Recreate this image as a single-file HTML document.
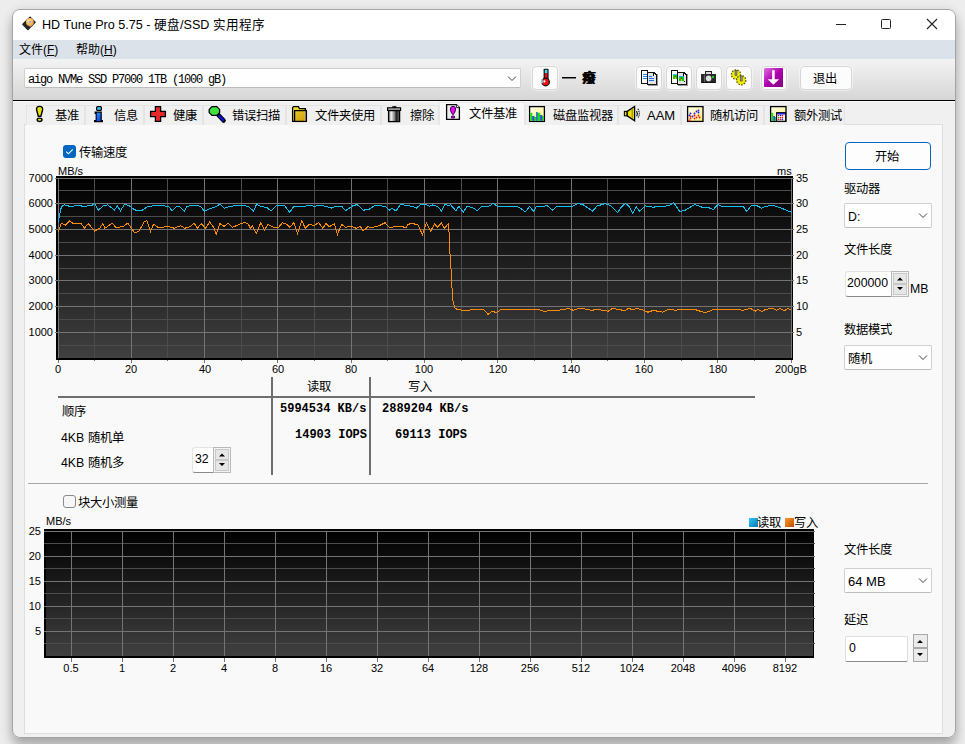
<!DOCTYPE html>
<html lang="zh-CN">
<head>
<meta charset="utf-8">
<style>
*{box-sizing:border-box;margin:0;padding:0}
html,body{width:965px;height:744px;overflow:hidden}
body{position:relative;background:#ededed;font-family:"Liberation Sans",sans-serif;color:#000;font-size:12px}
.a{position:absolute}
#shadow{position:absolute;left:12px;top:9px;width:944px;height:729px;border-radius:8px;box-shadow:0 9px 12px rgba(0,0,0,0.26),0 0 10px rgba(0,0,0,0.09)}
#win{position:absolute;left:12px;top:9px;width:944px;height:729px;border:1px solid #a4a4a4;border-radius:8px;overflow:hidden;background:#f0f0f0}
#in{position:absolute;left:-13px;top:-10px;width:965px;height:744px}
.t{position:absolute;white-space:nowrap;line-height:1}
.yl{position:absolute;text-align:right;font-size:11px;line-height:14px;white-space:nowrap;color:#000}
.yr{position:absolute;text-align:left;font-size:11px;line-height:14px;white-space:nowrap;color:#000}
.xl{position:absolute;text-align:center;font-size:11px;line-height:14px;white-space:nowrap;color:#000}
.tab{position:absolute;top:105px;height:20px;background:#f0f0f0;border:1px solid #e4e4e4;border-bottom:none}
.tab.sel{top:102px;height:23px;background:#f9f9f9;border-color:#e8e8e8;z-index:2}
.tb{position:absolute;top:66px;width:26px;height:24px;background:#fcfcfc;border:1px solid #d6d6d6;border-radius:4px;box-shadow:0 0 0 1px rgba(255,255,255,0.45)}
.mono{font-family:"Liberation Mono",monospace;font-weight:bold;font-size:12px}
.combo{position:absolute;background:#fefefe;border:1px solid #d0d0d0;border-bottom-color:#bdbdbd;border-radius:2px}
.chev{position:absolute}
</style>
</head>
<body>
<div id="shadow"></div>
<div id="win"><div id="in">
  <!-- title bar -->
  <div class="a" style="left:0;top:0;width:965px;height:40px;background:#fff"></div>
  <svg class="a" style="left:18px;top:12px" width="24" height="24" viewBox="0 0 24 24">
    <defs><radialGradient id="hd" cx="0.4" cy="0.4" r="0.6"><stop offset="0" stop-color="#ffe6a0"/><stop offset="1" stop-color="#eea040"/></radialGradient></defs>
    <g transform="rotate(-45 11 11.3)">
      <rect x="5.2" y="7" width="11.6" height="8.6" rx="0.8" fill="#262626"/>
      <rect x="9" y="13" width="4" height="2" fill="#8a8a8a"/>
    </g>
    <circle cx="11.9" cy="10" r="3.9" fill="url(#hd)"/>
    <circle cx="11.9" cy="10" r="1.2" fill="#a8b0c8"/>
  </svg>
  <div class="t" style="left:42px;top:19px;font-size:12.6px;color:#000">HD Tune Pro 5.75 - 硬盘/SSD 实用程序</div>
  <div class="a" style="left:836px;top:24px;width:10px;height:1px;background:#222"></div>
  <div class="a" style="left:881px;top:19px;width:10px;height:10px;border:1px solid #222;border-radius:1.5px"></div>
  <svg class="a" style="left:926px;top:18px" width="12" height="12" viewBox="0 0 12 12"><path d="M1 1 L11 11 M11 1 L1 11" stroke="#222" stroke-width="1.1"/></svg>

  <!-- menu bar -->
  <div class="a" style="left:0;top:40px;width:965px;height:19px;background:#dbe2ea"></div>
  <div class="t" style="left:19px;top:44px;font-size:12px">文件(<u>F</u>)</div>
  <div class="t" style="left:76px;top:44px;font-size:12px">帮助(<u>H</u>)</div>

  <!-- toolbar -->
  <div class="a" style="left:0;top:59px;width:965px;height:41px;background:linear-gradient(#f3f3f3,#d6d6d6)"></div>
  <div class="a" style="left:0;top:100px;width:965px;height:1px;background:#000"></div>
  <div class="a" style="left:0;top:101px;width:965px;height:1px;background:#fbfbfb"></div>
  <div class="combo" style="left:24px;top:68px;width:497px;height:20px;border-radius:2px"></div>
  <div class="t mono" style="left:28px;top:74px;font-weight:normal;font-size:12px;letter-spacing:-1.2px">aigo NVMe SSD P7000 1TB (1000 gB)</div>
  <svg class="chev" style="left:507px;top:75px" width="10" height="7" viewBox="0 0 10 7"><path d="M1 1.5 L5 5.5 L9 1.5" stroke="#444" stroke-width="1" fill="none"/></svg>

  <div class="tb" style="left:532px"></div>
  <svg class="a" style="left:539px;top:68px" width="14" height="20" viewBox="0 0 14 20">
    <rect x="4.6" y="0.7" width="5" height="13" rx="0.8" fill="#111"/>
    <rect x="5.8" y="1.8" width="2.6" height="3.4" fill="#40e0f0"/>
    <rect x="5.8" y="5.2" width="2.6" height="9" fill="#e81010"/>
    <circle cx="6.6" cy="14" r="4.4" fill="#111"/>
    <circle cx="6.6" cy="14" r="3.3" fill="#e81010"/>
    <circle cx="5.4" cy="13.4" r="1.1" fill="#fff"/>
    <rect x="2" y="11.2" width="1.8" height="4.2" fill="#7fdce6"/>
  </svg>
  <div class="a" style="left:562px;top:77px;width:14px;height:1px;background:#000"></div><div class="a" style="left:562px;top:78px;width:14px;height:1px;background:#777"></div>
  <div class="t" style="left:582px;top:71px;font-size:13px;font-weight:bold;text-shadow:0.5px 0 0 #000">癈</div>

  <div class="tb" style="left:636px"></div>
  <svg class="a" style="left:640px;top:69px" width="19" height="18" viewBox="0 0 19 18" shape-rendering="crispEdges">
    <rect x="1" y="1" width="7" height="14" fill="#111"/>
    <rect x="2" y="2" width="5" height="12" fill="#fafafa"/>
    <rect x="3" y="5" width="4" height="1" fill="#1a8cff"/><rect x="3" y="7" width="4" height="1" fill="#1a8cff"/><rect x="3" y="9" width="4" height="1" fill="#1a8cff"/>
    <rect x="8" y="16" width="10" height="1" fill="#999"/><rect x="17" y="5" width="1" height="12" fill="#999"/>
    <path d="M7 3 H14 L17 6 V16 H7 Z" fill="#111"/>
    <path d="M8 4 H13 V7 H16 V15 H8 Z" fill="#e4e4e4"/>
    <path d="M13.5 4 L16 6.5 H13.5 Z" fill="#fff"/>
    <rect x="9" y="7" width="3" height="1" fill="#1a6cff"/><rect x="9" y="9" width="5" height="1" fill="#1a6cff"/><rect x="9" y="11" width="5" height="1" fill="#1a6cff"/>
  </svg>
  <div class="tb" style="left:666px"></div>
  <svg class="a" style="left:670px;top:69px" width="19" height="18" viewBox="0 0 19 18" shape-rendering="crispEdges">
    <rect x="1" y="1" width="7" height="14" fill="#111"/>
    <rect x="2" y="2" width="5" height="12" fill="#fafafa"/>
    <rect x="3" y="5" width="4" height="1" fill="#20d0ff"/><rect x="3" y="6" width="4" height="4" fill="#10c810"/><rect x="5" y="7" width="1" height="1" fill="#e00000"/><rect x="5" y="8" width="1" height="2" fill="#e0d000"/>
    <rect x="8" y="16" width="10" height="1" fill="#999"/><rect x="17" y="5" width="1" height="12" fill="#999"/>
    <path d="M7 3 H14 L17 6 V16 H7 Z" fill="#111"/>
    <path d="M8 4 H13 V7 H16 V15 H8 Z" fill="#e4e4e4"/>
    <path d="M13.5 4 L16 6.5 H13.5 Z" fill="#fff"/>
    <rect x="9" y="7" width="5" height="1" fill="#20a0ff"/><rect x="9" y="8" width="5" height="4" fill="#10c810"/><rect x="11" y="9" width="1" height="1" fill="#e00000"/><rect x="11" y="10" width="1" height="2" fill="#e0d000"/><rect x="14" y="12" width="1" height="1" fill="#111"/>
  </svg>
  <div class="tb" style="left:696px"></div>
  <svg class="a" style="left:700px;top:70px" width="18" height="15" viewBox="0 0 18 15" shape-rendering="crispEdges">
    <rect x="5" y="1" width="7" height="4" fill="#222"/>
    <rect x="6" y="2" width="5" height="2" fill="#d8d8d8"/>
    <rect x="1" y="4" width="15" height="9" fill="#2a2a2a"/>
    <rect x="2" y="12" width="13" height="1" fill="#111"/>
    <rect x="4" y="5" width="1" height="7" fill="#666"/>
    <circle cx="8.6" cy="8.4" r="2.8" fill="#e0e0e0" shape-rendering="auto"/>
    <rect x="12" y="6" width="2" height="2" fill="#10e010"/>
  </svg>
  <div class="tb" style="left:726px"></div>
  <svg class="a" style="left:729px;top:69px" width="20" height="18" viewBox="0 0 20 18">
    <circle cx="7" cy="5.5" r="4.6" fill="#f0ec00" stroke="#5a5400" stroke-width="1.2" stroke-dasharray="1.6 1.2"/>
    <circle cx="12.2" cy="11.2" r="4.6" fill="#f0ec00" stroke="#5a5400" stroke-width="1.2" stroke-dasharray="1.6 1.2"/>
    <rect x="6" y="1.5" width="2" height="5" fill="#9090b0" stroke="#333" stroke-width="0.5"/>
    <rect x="11.2" y="7" width="2" height="5" fill="#9090b0" stroke="#333" stroke-width="0.5"/>
  </svg>
  <div class="tb" style="left:761px"></div>
  <svg class="a" style="left:764px;top:68px" width="19" height="19" viewBox="0 0 19 19">
    <defs><linearGradient id="pg" x1="0" y1="0" x2="1" y2="1"><stop offset="0" stop-color="#e070e0"/><stop offset="0.5" stop-color="#b000b0"/><stop offset="1" stop-color="#800080"/></linearGradient></defs>
    <rect x="0" y="0" width="19" height="19" rx="1" fill="url(#pg)"/>
    <path d="M8.1 2.2 H10.7 V11.2 H15.2 L9.4 16.8 L3.6 11.2 H8.1 Z" fill="#fff"/>
  </svg>
  <div class="tb" style="left:800px;width:52px"></div>
  <div class="t" style="left:813px;top:73px;font-size:12.3px">退出</div>

  <!-- tabs -->
  <div class="a" style="left:24px;top:124px;width:919px;height:610px;background:#f9f9f9;border:1px solid #dedede"></div>
  <div class="tab" style="left:26px;width:59px"></div>
  <div class="tab" style="left:85px;width:59px"></div>
  <div class="tab" style="left:144px;width:59px"></div>
  <div class="tab" style="left:203px;width:83px"></div>
  <div class="tab" style="left:286px;width:95px"></div>
  <div class="tab" style="left:381px;width:58px"></div>
  <div class="tab sel" style="left:439px;width:86px"></div>
  <div class="tab" style="left:525px;width:93px"></div>
  <div class="tab" style="left:618px;width:63px"></div>
  <div class="tab" style="left:681px;width:83px"></div>
  <div class="tab" style="left:764px;width:81px"></div>
  <svg class="a" style="left:0;top:0;z-index:3" width="965" height="130" viewBox="0 0 965 130">
    <defs>
      <linearGradient id="gi" x1="0" y1="0" x2="1" y2="1"><stop offset="0" stop-color="#30a0ff"/><stop offset="1" stop-color="#0030f0"/></linearGradient>
      <linearGradient id="gy" x1="0" y1="0" x2="1" y2="1"><stop offset="0" stop-color="#ffffe8"/><stop offset="1" stop-color="#fff080"/></linearGradient>
      <linearGradient id="gf" x1="0" y1="0" x2="1" y2="1"><stop offset="0" stop-color="#e8cc30"/><stop offset="1" stop-color="#d09a00"/></linearGradient>
      <linearGradient id="gt" x1="0" y1="0" x2="1" y2="0"><stop offset="0" stop-color="#909090"/><stop offset="0.25" stop-color="#f0f0f0"/><stop offset="0.55" stop-color="#808080"/><stop offset="0.7" stop-color="#202020"/><stop offset="1" stop-color="#707070"/></linearGradient>
    </defs>
    <!-- exclamation -->
    <path d="M39.6 106.4 C37 106.4 36.4 107.8 36.6 109.8 L38.3 116.3 H40.9 L42.6 109.8 C42.8 107.8 42.2 106.4 39.6 106.4 Z" fill="#e4e400" stroke="#000" stroke-width="1.4"/>
    <ellipse cx="39.6" cy="119.8" rx="2.4" ry="1.7" fill="#e4e400" stroke="#000" stroke-width="1.4"/>
    <!-- i -->
    <rect x="96.6" y="106.6" width="4.8" height="3.8" rx="1" fill="#38c8ff" stroke="#000" stroke-width="1.2"/>
    <path d="M95.2 112.2 H101.2 V120.6 H102.4 V121.6 H94.6 V120.6 H96.2 V113.4 H95.2 Z" fill="url(#gi)" stroke="#000" stroke-width="1.2"/>
    <!-- cross -->
    <path d="M155.4 106.6 H160.6 V111.4 H165.4 V116.6 H160.6 V121.4 H155.4 V116.6 H150.6 V111.4 H155.4 Z" fill="#e42a2a" stroke="#000" stroke-width="1.3"/>
    <!-- magnifier -->
    <path d="M218.6 115.2 L223.6 120.6" stroke="#000" stroke-width="4.4" stroke-linecap="round"/>
    <path d="M218.6 115.2 L223.6 120.6" stroke="#1010e0" stroke-width="2.4"/>
    <path d="M212 106.6 H216.8 L219.6 109.4 V112.6 L216.8 115.4 H212 L209.2 112.6 V109.4 Z" fill="#40e040" stroke="#000" stroke-width="1.3"/>
    <!-- folder -->
    <path d="M292.6 107.6 L293.6 106.6 H298.4 L299.4 108.6 H305.4 V121.4 H292.6 Z" fill="#f4dc30" stroke="#000" stroke-width="1.3"/>
    <rect x="294.6" y="110.6" width="11.8" height="10.8" fill="url(#gf)" stroke="#000" stroke-width="1.3"/>
    <path d="M304.5 111.5 V120.5" stroke="#b0b0b0" stroke-width="0.8"/>
    <!-- trash -->
    <rect x="392.4" y="106.2" width="4" height="2" fill="#000"/>
    <rect x="387.6" y="107.8" width="13" height="2.6" fill="#c8c8c8" stroke="#000" stroke-width="1.2"/>
    <rect x="388.6" y="110.6" width="11" height="11" fill="url(#gt)" stroke="#000" stroke-width="1.3"/>
    <!-- file benchmark -->
    <path d="M446.6 104.6 H456.4 L459.4 107.6 V119.4 H446.6 Z" fill="#ececec" stroke="#000" stroke-width="1.3"/>
    <path d="M456.4 104.6 V107.6 H459.4" fill="#fff" stroke="#000" stroke-width="0.8"/>
    <path d="M453 106.4 C451.2 106.4 450.4 107.4 450.4 109 C450.4 111 451.6 113.4 453 114.8 C454.4 113.4 455.6 111 455.6 109 C455.6 107.4 454.8 106.4 453 106.4 Z" fill="#f000f0" stroke="#200040" stroke-width="1"/>
    <ellipse cx="453" cy="117" rx="1.8" ry="1.1" fill="#f000f0" stroke="#200040" stroke-width="0.9"/>
    <!-- monitor -->
    <rect x="529.6" y="106.6" width="14.8" height="14.8" fill="url(#gy)" stroke="#000" stroke-width="1.3"/>
    <path d="M530.3 112.8 H532.3 V116 H534.3 V116.9 H536.3 V112 H537.3 V112.8 H540.2 V115 H542.2 V116 H543.8 V120.8 H530.3 Z" fill="#10e010"/>
    <rect x="532.3" y="116" width="2" height="4.8" fill="#4040ff"/>
    <rect x="536.3" y="112" width="1.2" height="8.8" fill="#4040ff"/>
    <rect x="540.2" y="115" width="2" height="5.8" fill="#4040ff"/>
    <!-- speaker -->
    <rect x="624.4" y="111.4" width="2.8" height="4.4" fill="#f0e000" stroke="#000" stroke-width="1.1"/>
    <path d="M627.2 111.4 L634.6 106.4 V120.8 L627.2 115.8 Z" fill="#f0e000" stroke="#000" stroke-width="1.3"/>
    <path d="M632.2 108 V119.4" stroke="#555" stroke-width="0.7"/>
    <path d="M636.6 111 Q638 113.6 636.6 116.2" stroke="#000" stroke-width="1.1" fill="none"/>
    <path d="M637.8 108.8 Q640.8 113.6 637.8 118.4" stroke="#000" stroke-width="1.1" fill="none" stroke-dasharray="1.2 0.8"/>
    <!-- random access -->
    <rect x="687.6" y="106.6" width="15.4" height="14.8" fill="url(#gy)" stroke="#000" stroke-width="1.3"/>
    <circle cx="690.5" cy="113.5" r="0.9" fill="#1a1aff"/><circle cx="689.4" cy="115.4" r="0.9" fill="#1a1aff"/><circle cx="692.5" cy="116.5" r="0.9" fill="#1a1aff"/><circle cx="694.5" cy="113.5" r="0.9" fill="#1a1aff"/><circle cx="696.5" cy="111.5" r="0.9" fill="#1a1aff"/><circle cx="698.5" cy="110.4" r="0.9" fill="#1a1aff"/><circle cx="698.5" cy="112.5" r="0.9" fill="#1a1aff"/><circle cx="690.5" cy="116.5" r="0.9" fill="#ff1010"/><circle cx="690.5" cy="118.4" r="0.9" fill="#ff1010"/><circle cx="689.5" cy="120.5" r="0.9" fill="#ff1010"/><circle cx="694.5" cy="115.5" r="0.9" fill="#ff1010"/><circle cx="694.5" cy="118.4" r="0.9" fill="#ff1010"/><circle cx="696.5" cy="117.5" r="0.9" fill="#ff1010"/><circle cx="698.5" cy="115.5" r="0.9" fill="#ff1010"/><circle cx="699.6" cy="117.5" r="0.9" fill="#ff1010"/>
    <!-- extra test -->
    <rect x="770.6" y="106.6" width="15.4" height="14.8" fill="url(#gy)" stroke="#000" stroke-width="1.3"/>
    <rect x="771.2" y="112.9" width="2" height="8" fill="#10e010"/>
    <rect x="773.2" y="116" width="1.8" height="4.9" fill="#4444ff"/>
    <rect x="775" y="116.9" width="1.2" height="4" fill="#10e010"/>
    <rect x="776.6" y="112.6" width="9" height="8.6" fill="#f4f4f4" stroke="#000" stroke-width="1"/>
    <rect x="777.1" y="113.1" width="8" height="1.4" fill="#1010e0"/>
    <circle cx="778.4" cy="115.5" r="0.8" fill="#ff1010"/><circle cx="782.4" cy="115.5" r="0.8" fill="#ff1010"/><circle cx="780.5" cy="117.5" r="0.8" fill="#ff1010"/><circle cx="782.4" cy="117.5" r="0.8" fill="#ff1010"/><circle cx="778.4" cy="119.4" r="0.8" fill="#ff1010"/><circle cx="780.5" cy="119.4" r="0.8" fill="#ff1010"/><circle cx="780.5" cy="115.5" r="0.8" fill="#1a1aff"/><circle cx="782.4" cy="119.4" r="0.8" fill="#1a1aff"/><circle cx="778.4" cy="117.5" r="0.8" fill="#10c010"/>
  </svg>
  <div class="t" style="left:55px;top:110px;font-size:12.3px;z-index:3">基准</div>
  <div class="t" style="left:114px;top:110px;font-size:12.3px;z-index:3">信息</div>
  <div class="t" style="left:173px;top:110px;font-size:12.3px;z-index:3">健康</div>
  <div class="t" style="left:232px;top:110px;font-size:12.3px;z-index:3">错误扫描</div>
  <div class="t" style="left:315px;top:110px;font-size:12.3px;z-index:3">文件夹使用</div>
  <div class="t" style="left:410px;top:110px;font-size:12.3px;z-index:3">擦除</div>
  <div class="t" style="left:469px;top:108px;font-size:12.3px;z-index:3">文件基准</div>
  <div class="t" style="left:553px;top:110px;font-size:12.3px;z-index:3">磁盘监视器</div>
  <div class="t" style="left:647px;top:109px;font-size:13px;z-index:3">AAM</div>
  <div class="t" style="left:710px;top:110px;font-size:12.3px;z-index:3">随机访问</div>
  <div class="t" style="left:794px;top:110px;font-size:12.3px;z-index:3">额外测试</div>

  <!-- checkbox transfer speed -->
  <div class="a" style="left:63px;top:145px;width:13px;height:13px;background:#0067c0;border-radius:3px"></div>
  <svg class="a" style="left:63px;top:145px" width="13" height="13" viewBox="0 0 13 13"><path d="M3.2 6.6 L5.4 8.8 L9.8 4.4" stroke="#fff" stroke-width="1.1" fill="none"/></svg>
  <div class="t" style="left:79px;top:147px;font-size:12.3px">传输速度</div>

  <!-- chart 1 -->
  <div class="t" style="left:58px;top:166px;font-size:11px">MB/s</div>
  <div class="t" style="left:777px;top:166px;font-size:11px">ms</div>
  <div class="a" style="left:56px;top:176px;width:737px;height:184px;background:#000"></div>
  <div class="a" style="left:58px;top:178px;width:734px;height:180px;background:linear-gradient(#000,#404040)"></div>
  <div class="a" style="left:44px;top:529px;width:770px;height:129px;background:#000;z-index:-0"></div>
  <div class="a" style="left:46px;top:531px;width:767px;height:125px;background:linear-gradient(#000,#404040)"></div>
  <svg class="a" style="left:0;top:0" width="965" height="744" shape-rendering="crispEdges">
<line x1="94.5" y1="178" x2="94.5" y2="358" stroke="#4c4c4c"/>
<line x1="167.5" y1="178" x2="167.5" y2="358" stroke="#4c4c4c"/>
<line x1="241.5" y1="178" x2="241.5" y2="358" stroke="#4c4c4c"/>
<line x1="314.5" y1="178" x2="314.5" y2="358" stroke="#4c4c4c"/>
<line x1="387.5" y1="178" x2="387.5" y2="358" stroke="#4c4c4c"/>
<line x1="461.5" y1="178" x2="461.5" y2="358" stroke="#4c4c4c"/>
<line x1="534.5" y1="178" x2="534.5" y2="358" stroke="#4c4c4c"/>
<line x1="607.5" y1="178" x2="607.5" y2="358" stroke="#4c4c4c"/>
<line x1="681.5" y1="178" x2="681.5" y2="358" stroke="#4c4c4c"/>
<line x1="754.5" y1="178" x2="754.5" y2="358" stroke="#4c4c4c"/>
<line x1="58" y1="345.5" x2="792" y2="345.5" stroke="#4c4c4c"/>
<line x1="58" y1="319.5" x2="792" y2="319.5" stroke="#4c4c4c"/>
<line x1="58" y1="293.5" x2="792" y2="293.5" stroke="#4c4c4c"/>
<line x1="58" y1="268.5" x2="792" y2="268.5" stroke="#4c4c4c"/>
<line x1="58" y1="242.5" x2="792" y2="242.5" stroke="#4c4c4c"/>
<line x1="58" y1="216.5" x2="792" y2="216.5" stroke="#4c4c4c"/>
<line x1="58" y1="190.5" x2="792" y2="190.5" stroke="#4c4c4c"/>
<line x1="58.5" y1="178" x2="58.5" y2="358" stroke="#747474"/>
<line x1="131.5" y1="178" x2="131.5" y2="358" stroke="#747474"/>
<line x1="204.5" y1="178" x2="204.5" y2="358" stroke="#747474"/>
<line x1="277.5" y1="178" x2="277.5" y2="358" stroke="#747474"/>
<line x1="351.5" y1="178" x2="351.5" y2="358" stroke="#747474"/>
<line x1="424.5" y1="178" x2="424.5" y2="358" stroke="#747474"/>
<line x1="497.5" y1="178" x2="497.5" y2="358" stroke="#747474"/>
<line x1="571.5" y1="178" x2="571.5" y2="358" stroke="#747474"/>
<line x1="644.5" y1="178" x2="644.5" y2="358" stroke="#747474"/>
<line x1="717.5" y1="178" x2="717.5" y2="358" stroke="#747474"/>
<line x1="791.5" y1="178" x2="791.5" y2="358" stroke="#747474"/>
<line x1="58" y1="332.5" x2="792" y2="332.5" stroke="#747474"/>
<line x1="58" y1="306.5" x2="792" y2="306.5" stroke="#747474"/>
<line x1="58" y1="280.5" x2="792" y2="280.5" stroke="#747474"/>
<line x1="58" y1="255.5" x2="792" y2="255.5" stroke="#747474"/>
<line x1="58" y1="229.5" x2="792" y2="229.5" stroke="#747474"/>
<line x1="58" y1="203.5" x2="792" y2="203.5" stroke="#747474"/>
<line x1="58" y1="178.5" x2="792" y2="178.5" stroke="#747474"/>
<line x1="58.5" y1="360" x2="58.5" y2="363" stroke="#747474"/>
<line x1="94.5" y1="360" x2="94.5" y2="361" stroke="#747474"/>
<line x1="131.5" y1="360" x2="131.5" y2="363" stroke="#747474"/>
<line x1="167.5" y1="360" x2="167.5" y2="361" stroke="#747474"/>
<line x1="204.5" y1="360" x2="204.5" y2="363" stroke="#747474"/>
<line x1="241.5" y1="360" x2="241.5" y2="361" stroke="#747474"/>
<line x1="277.5" y1="360" x2="277.5" y2="363" stroke="#747474"/>
<line x1="314.5" y1="360" x2="314.5" y2="361" stroke="#747474"/>
<line x1="351.5" y1="360" x2="351.5" y2="363" stroke="#747474"/>
<line x1="387.5" y1="360" x2="387.5" y2="361" stroke="#747474"/>
<line x1="424.5" y1="360" x2="424.5" y2="363" stroke="#747474"/>
<line x1="461.5" y1="360" x2="461.5" y2="361" stroke="#747474"/>
<line x1="497.5" y1="360" x2="497.5" y2="363" stroke="#747474"/>
<line x1="534.5" y1="360" x2="534.5" y2="361" stroke="#747474"/>
<line x1="571.5" y1="360" x2="571.5" y2="363" stroke="#747474"/>
<line x1="607.5" y1="360" x2="607.5" y2="361" stroke="#747474"/>
<line x1="644.5" y1="360" x2="644.5" y2="363" stroke="#747474"/>
<line x1="681.5" y1="360" x2="681.5" y2="361" stroke="#747474"/>
<line x1="717.5" y1="360" x2="717.5" y2="363" stroke="#747474"/>
<line x1="754.5" y1="360" x2="754.5" y2="361" stroke="#747474"/>
<line x1="791.5" y1="360" x2="791.5" y2="363" stroke="#747474"/>
<line x1="55" y1="332.5" x2="58" y2="332.5" stroke="#747474"/>
<line x1="792" y1="332.5" x2="794" y2="332.5" stroke="#747474"/>
<line x1="55" y1="306.5" x2="58" y2="306.5" stroke="#747474"/>
<line x1="792" y1="306.5" x2="794" y2="306.5" stroke="#747474"/>
<line x1="55" y1="280.5" x2="58" y2="280.5" stroke="#747474"/>
<line x1="792" y1="280.5" x2="794" y2="280.5" stroke="#747474"/>
<line x1="55" y1="255.5" x2="58" y2="255.5" stroke="#747474"/>
<line x1="792" y1="255.5" x2="794" y2="255.5" stroke="#747474"/>
<line x1="55" y1="229.5" x2="58" y2="229.5" stroke="#747474"/>
<line x1="792" y1="229.5" x2="794" y2="229.5" stroke="#747474"/>
<line x1="55" y1="203.5" x2="58" y2="203.5" stroke="#747474"/>
<line x1="792" y1="203.5" x2="794" y2="203.5" stroke="#747474"/>
<line x1="55" y1="178.5" x2="58" y2="178.5" stroke="#747474"/>
<line x1="792" y1="178.5" x2="794" y2="178.5" stroke="#747474"/>
    <polyline points="58.3,231.5 61.4,223.2 65.5,225.2 69.7,220.7 72.8,223.2 81.1,223.2 84.2,228.3 88.3,223.6 94.6,231.0 99.7,228.3 102.8,223.6 104.9,228.3 112.2,223.2 116.3,227.9 123.6,226.3 127.7,223.2 135.0,233.1 139.1,231.0 144.3,221.5 147.0,220.7 150.5,231.5 153.6,224.2 158.8,227.9 168.1,226.3 174.4,228.3 180.6,225.6 184.7,228.3 190.9,226.3 194.0,222.7 197.2,228.3 201.3,223.6 205.4,228.3 209.6,222.1 213.7,227.3 216.2,233.9 219.9,223.6 224.1,226.3 228.2,223.2 232.4,227.3 244.8,222.1 248.3,224.2 250.4,228.3 252.4,226.3 256.6,233.5 260.7,222.7 264.5,229.8 268.0,224.2 273.2,227.3 278.3,227.7 282.5,222.7 286.6,224.2 289.7,227.3 293.9,222.7 297.6,233.5 301.8,220.7 305.3,228.3 309.4,224.2 313.6,225.6 318.8,222.7 322.9,228.3 326.0,223.2 329.1,226.9 334.3,223.6 337.4,234.6 341.6,224.2 345.7,227.3 349.8,226.3 353.0,226.9 356.1,228.3 360.2,226.3 363.3,231.0 367.5,226.9 372.6,227.3 377.8,226.3 385.1,222.7 389.2,227.3 401.7,226.3 405.8,227.9 407.9,224.2 413.1,223.6 415.1,224.2 418.2,225.2 422.4,234.6 426.5,222.7 430.7,231.0 434.8,223.6 437.3,227.3 441.4,223.2 444.5,228.3 448.7,223.2 449.7,250.1 450.7,262.5 451.8,285.3 452.8,299.8 454.9,308.1 458.0,309.8 463.2,310.2 466.3,310.6 471.5,309.8 477.7,309.8 483.9,309.8 488.0,314.4 492.2,311.2 496.3,312.7 500.5,309.8 508.8,309.2 517.0,309.8 525.3,309.2 537.8,309.2 544.0,311.2 554.4,310.6 562.6,309.8 568.9,308.5 573.0,310.2 579.2,308.5 587.5,309.2 591.7,310.6 595.8,309.2 608.2,311.2 612.4,308.5 620.7,309.8 624.7,310.9 628.4,308.4 633.1,309.8 635.9,308.4 642.4,309.8 648.0,312.2 653.6,310.3 657.3,311.2 662.9,312.2 668.5,309.4 676.0,310.3 679.7,309.4 694.6,309.4 700.2,311.2 705.8,312.7 713.3,309.4 737.5,309.4 743.1,310.3 750.6,308.4 755.2,311.2 758.0,309.4 761.8,311.6 765.5,309.4 773.0,308.4 776.7,310.3 780.4,308.4 784.1,310.9 787.9,308.4 791.6,310.3" fill="none" stroke="#ff8c00" stroke-width="1"/>
    <polyline points="58.3,222.0 61.4,206.6 64.5,204.9 70.7,206.6 76.9,205.5 83.2,206.2 91.5,205.8 94.6,203.5 98.1,210.3 103.9,205.5 108.0,204.9 114.2,210.1 117.4,206.2 120.5,210.7 124.6,204.1 128.8,205.5 132.9,208.7 136.0,210.3 142.2,210.3 147.4,206.6 155.7,205.5 168.1,206.2 172.3,210.7 176.4,206.6 179.5,206.2 184.3,211.1 186.8,206.2 195.1,205.5 200.3,206.2 204.4,211.1 207.5,209.7 215.8,206.6 219.9,204.1 224.1,208.2 230.3,206.2 240.7,205.5 248.3,206.2 253.5,211.1 256.6,204.1 260.7,206.2 266.9,207.6 271.1,211.1 276.3,205.5 284.6,205.5 289.7,212.4 293.9,206.2 302.2,207.0 308.4,205.5 314.6,206.2 320.8,205.5 327.0,206.6 331.2,208.2 335.3,206.2 341.6,206.2 345.7,210.7 351.9,206.2 357.1,204.5 363.3,210.1 368.5,209.7 374.7,205.5 385.1,206.2 389.2,210.3 392.3,208.2 395.9,211.1 400.6,204.1 405.8,205.5 412.0,206.2 416.2,208.2 420.3,204.9 425.5,204.5 429.6,206.2 432.7,204.9 435.2,205.5 438.3,207.0 441.4,211.1 444.9,204.1 447.6,205.5 450.7,204.9 455.9,210.7 459.0,206.2 463.2,212.4 467.3,206.2 473.5,208.2 477.3,210.7 481.8,206.2 488.0,206.6 493.2,203.5 497.4,206.2 506.7,207.0 517.0,206.2 521.2,208.7 525.3,211.8 529.5,206.6 533.6,211.1 536.7,206.2 543.0,206.6 547.1,205.5 552.3,210.3 556.4,206.6 564.7,206.6 573.0,206.2 578.2,203.5 583.4,204.9 588.5,208.2 592.7,211.1 596.8,206.2 605.1,203.5 610.3,205.5 617.6,212.4 621.7,206.6 625.6,203.4 629.3,206.8 632.7,213.3 636.4,206.8 639.6,211.5 645.2,205.9 653.6,207.2 657.3,206.4 668.5,205.9 673.7,202.7 679.7,211.5 685.3,210.1 694.6,204.5 702.1,207.2 707.7,207.2 713.3,209.6 717.9,204.5 721.7,206.4 743.1,206.4 746.8,211.5 751.5,205.3 756.2,205.3 761.8,208.3 765.5,206.4 773.0,205.3 780.4,207.7 791.6,212.4" fill="none" stroke="#12bff0" stroke-width="1"/>
<line x1="44" y1="643.5" x2="815" y2="643.5" stroke="#4c4c4c"/>
<line x1="44" y1="618.5" x2="815" y2="618.5" stroke="#4c4c4c"/>
<line x1="44" y1="593.5" x2="815" y2="593.5" stroke="#4c4c4c"/>
<line x1="44" y1="568.5" x2="815" y2="568.5" stroke="#4c4c4c"/>
<line x1="44" y1="543.5" x2="815" y2="543.5" stroke="#4c4c4c"/>
<line x1="71.5" y1="531" x2="71.5" y2="656" stroke="#747474"/>
<line x1="122.5" y1="531" x2="122.5" y2="656" stroke="#747474"/>
<line x1="173.5" y1="531" x2="173.5" y2="656" stroke="#747474"/>
<line x1="224.5" y1="531" x2="224.5" y2="656" stroke="#747474"/>
<line x1="275.5" y1="531" x2="275.5" y2="656" stroke="#747474"/>
<line x1="326.5" y1="531" x2="326.5" y2="656" stroke="#747474"/>
<line x1="377.5" y1="531" x2="377.5" y2="656" stroke="#747474"/>
<line x1="428.5" y1="531" x2="428.5" y2="656" stroke="#747474"/>
<line x1="479.5" y1="531" x2="479.5" y2="656" stroke="#747474"/>
<line x1="530.5" y1="531" x2="530.5" y2="656" stroke="#747474"/>
<line x1="581.5" y1="531" x2="581.5" y2="656" stroke="#747474"/>
<line x1="632.5" y1="531" x2="632.5" y2="656" stroke="#747474"/>
<line x1="683.5" y1="531" x2="683.5" y2="656" stroke="#747474"/>
<line x1="734.5" y1="531" x2="734.5" y2="656" stroke="#747474"/>
<line x1="785.5" y1="531" x2="785.5" y2="656" stroke="#747474"/>
<line x1="44" y1="631.5" x2="815" y2="631.5" stroke="#747474"/>
<line x1="44" y1="606.5" x2="815" y2="606.5" stroke="#747474"/>
<line x1="44" y1="581.5" x2="815" y2="581.5" stroke="#747474"/>
<line x1="44" y1="556.5" x2="815" y2="556.5" stroke="#747474"/>
<line x1="44" y1="531.5" x2="815" y2="531.5" stroke="#747474"/>
<line x1="71.5" y1="658" x2="71.5" y2="662" stroke="#747474"/>
<line x1="122.5" y1="658" x2="122.5" y2="662" stroke="#747474"/>
<line x1="173.5" y1="658" x2="173.5" y2="662" stroke="#747474"/>
<line x1="224.5" y1="658" x2="224.5" y2="662" stroke="#747474"/>
<line x1="275.5" y1="658" x2="275.5" y2="662" stroke="#747474"/>
<line x1="326.5" y1="658" x2="326.5" y2="662" stroke="#747474"/>
<line x1="377.5" y1="658" x2="377.5" y2="662" stroke="#747474"/>
<line x1="428.5" y1="658" x2="428.5" y2="662" stroke="#747474"/>
<line x1="479.5" y1="658" x2="479.5" y2="662" stroke="#747474"/>
<line x1="530.5" y1="658" x2="530.5" y2="662" stroke="#747474"/>
<line x1="581.5" y1="658" x2="581.5" y2="662" stroke="#747474"/>
<line x1="632.5" y1="658" x2="632.5" y2="662" stroke="#747474"/>
<line x1="683.5" y1="658" x2="683.5" y2="662" stroke="#747474"/>
<line x1="734.5" y1="658" x2="734.5" y2="662" stroke="#747474"/>
<line x1="785.5" y1="658" x2="785.5" y2="662" stroke="#747474"/>
  </svg>
  <div class="a" style="left:0;top:0">
<div class="yl" style="top:325px;left:0;width:53px">1000</div><div class="yr" style="top:325px;left:796px">5</div><div class="yl" style="top:299px;left:0;width:53px">2000</div><div class="yr" style="top:299px;left:796px">10</div><div class="yl" style="top:273px;left:0;width:53px">3000</div><div class="yr" style="top:273px;left:796px">15</div><div class="yl" style="top:248px;left:0;width:53px">4000</div><div class="yr" style="top:248px;left:796px">20</div><div class="yl" style="top:222px;left:0;width:53px">5000</div><div class="yr" style="top:222px;left:796px">25</div><div class="yl" style="top:196px;left:0;width:53px">6000</div><div class="yr" style="top:196px;left:796px">30</div><div class="yl" style="top:171px;left:0;width:53px">7000</div><div class="yr" style="top:171px;left:796px">35</div>
<div class="xl" style="top:362px;left:28px;width:60px">0</div><div class="xl" style="top:362px;left:101px;width:60px">20</div><div class="xl" style="top:362px;left:175px;width:60px">40</div><div class="xl" style="top:362px;left:248px;width:60px">60</div><div class="xl" style="top:362px;left:321px;width:60px">80</div><div class="xl" style="top:362px;left:394px;width:60px">100</div><div class="xl" style="top:362px;left:468px;width:60px">120</div><div class="xl" style="top:362px;left:541px;width:60px">140</div><div class="xl" style="top:362px;left:614px;width:60px">160</div><div class="xl" style="top:362px;left:688px;width:60px">180</div><div class="xl" style="top:362px;left:775px;text-align:left">200gB</div>
<div class="yl" style="top:624px;left:0;width:41px">5</div><div class="yl" style="top:599px;left:0;width:41px">10</div><div class="yl" style="top:574px;left:0;width:41px">15</div><div class="yl" style="top:549px;left:0;width:41px">20</div><div class="yl" style="top:524px;left:0;width:41px">25</div>
<div class="xl" style="top:661px;left:41px;width:60px">0.5</div><div class="xl" style="top:661px;left:92px;width:60px">1</div><div class="xl" style="top:661px;left:143px;width:60px">2</div><div class="xl" style="top:661px;left:194px;width:60px">4</div><div class="xl" style="top:661px;left:245px;width:60px">8</div><div class="xl" style="top:661px;left:296px;width:60px">16</div><div class="xl" style="top:661px;left:347px;width:60px">32</div><div class="xl" style="top:661px;left:398px;width:60px">64</div><div class="xl" style="top:661px;left:449px;width:60px">128</div><div class="xl" style="top:661px;left:500px;width:60px">256</div><div class="xl" style="top:661px;left:551px;width:60px">512</div><div class="xl" style="top:661px;left:602px;width:60px">1024</div><div class="xl" style="top:661px;left:653px;width:60px">2048</div><div class="xl" style="top:661px;left:704px;width:60px">4096</div><div class="xl" style="top:661px;left:755px;width:60px">8192</div>
  </div>

  <!-- results table -->
  <div class="a" style="left:271px;top:377px;width:2px;height:98px;background:#6e6e6e"></div>
  <div class="a" style="left:369px;top:377px;width:2px;height:98px;background:#6e6e6e"></div>
  <div class="a" style="left:58px;top:396px;width:697px;height:2px;background:#6e6e6e"></div>
  <div class="t" style="left:307px;top:381px;font-size:12.3px">读取</div>
  <div class="t" style="left:408px;top:381px;font-size:12.3px">写入</div>
  <div class="t" style="left:62px;top:406px;font-size:12.3px">顺序</div>
  <div class="t" style="left:61px;top:432px;font-size:12.3px">4KB 随机单</div>
  <div class="t" style="left:61px;top:457px;font-size:12.3px">4KB 随机多</div>
  <div class="t mono" style="left:280px;top:403px">5994534 KB/s</div>
  <div class="t mono" style="left:382px;top:403px">2889204 KB/s</div>
  <div class="t mono" style="left:295px;top:429px">14903 IOPS</div>
  <div class="t mono" style="left:395px;top:429px">69113 IOPS</div>
  <div class="a" style="left:192px;top:447px;width:22px;height:26px;background:#fff;border:1px solid #e4e4e4;border-right:none;border-bottom:1px solid #8a8a8a;border-radius:3px 0 0 3px"></div>
  <div class="t" style="left:195px;top:453px;font-size:12.3px">32</div>
  <div class="a" style="left:213px;top:447px;width:18px;height:26px;background:#f4f4f4;border:1px solid #b8b8b8"></div>
  <div class="a" style="left:215px;top:449px;width:14px;height:11px;background:#e6e6e6;border:1px solid #c8c8c8"></div>
  <div class="a" style="left:215px;top:460px;width:14px;height:11px;background:#e6e6e6;border:1px solid #c8c8c8"></div>
  <svg class="a" style="left:218px;top:452px" width="8" height="16" viewBox="0 0 8 16"><path d="M1 4.5 L4 1.5 L7 4.5 Z M1 11 L4 14 L7 11 Z" fill="#000"/></svg>

  <!-- separator -->
  <div class="a" style="left:28px;top:483px;width:900px;height:1px;background:#a8a8a8"></div>

  <!-- checkbox block size -->
  <div class="a" style="left:63px;top:495px;width:13px;height:13px;background:#f6f6f6;border:1px solid #8a8a8a;border-radius:3px"></div>
  <div class="t" style="left:78px;top:497px;font-size:12.3px">块大小测量</div>

  <!-- chart 2 -->
  <div class="t" style="left:46px;top:516px;font-size:11px">MB/s</div>
  <div class="a" style="left:749px;top:518px;width:9px;height:9px;background:linear-gradient(135deg,#30c8f8,#0878b0)"></div>
  <div class="t" style="left:757px;top:517px;font-size:12.3px">读取</div>
  <div class="a" style="left:785px;top:518px;width:9px;height:9px;background:linear-gradient(135deg,#ff9828,#b85000)"></div>
  <div class="t" style="left:794px;top:517px;font-size:12.3px">写入</div>

  <!-- right panel -->
  <div class="a" style="left:845px;top:142px;width:86px;height:28px;background:#fdfdfd;border:1px solid #0067c0;border-radius:4px"></div>
  <div class="t" style="left:875px;top:151px;font-size:12.3px">开始</div>
  <div class="t" style="left:844px;top:183px;font-size:12.3px">驱动器</div>
  <div class="combo" style="left:844px;top:203px;width:88px;height:25px"></div>
  <div class="t" style="left:848px;top:211px;font-size:12.3px">D:</div>
  <svg class="chev" style="left:918px;top:212px" width="10" height="7" viewBox="0 0 10 7"><path d="M1 1.5 L5 5.5 L9 1.5" stroke="#444" stroke-width="1" fill="none"/></svg>
  <div class="t" style="left:844px;top:244px;font-size:12.3px">文件长度</div>
  <div class="a" style="left:845px;top:271px;width:47px;height:26px;background:#fff;border:1px solid #e2e2e2;border-right:none;border-bottom:1px solid #8a8a8a;border-radius:3px 0 0 3px;overflow:hidden"><div class="t" style="left:1px;top:5px;font-size:12.3px">200000</div></div>
  <div class="a" style="left:891px;top:271px;width:18px;height:26px;background:#f4f4f4;border:1px solid #b8b8b8"></div>
  <div class="a" style="left:893px;top:273px;width:14px;height:11px;background:#e6e6e6;border:1px solid #c8c8c8"></div>
  <div class="a" style="left:893px;top:284px;width:14px;height:11px;background:#e6e6e6;border:1px solid #c8c8c8"></div>
  <svg class="a" style="left:896px;top:276px" width="8" height="16" viewBox="0 0 8 16"><path d="M1 4.5 L4 1.5 L7 4.5 Z M1 11 L4 14 L7 11 Z" fill="#000"/></svg>
  <div class="t" style="left:910px;top:283px;font-size:12.3px">MB</div>
  <div class="t" style="left:844px;top:324px;font-size:12.3px">数据模式</div>
  <div class="combo" style="left:844px;top:345px;width:88px;height:25px"></div>
  <div class="t" style="left:848px;top:353px;font-size:12.3px">随机</div>
  <svg class="chev" style="left:918px;top:354px" width="10" height="7" viewBox="0 0 10 7"><path d="M1 1.5 L5 5.5 L9 1.5" stroke="#444" stroke-width="1" fill="none"/></svg>

  <div class="t" style="left:844px;top:544px;font-size:12.3px">文件长度</div>
  <div class="combo" style="left:844px;top:568px;width:88px;height:25px"></div>
  <div class="t" style="left:848px;top:575px;font-size:13px">64 MB</div>
  <svg class="chev" style="left:918px;top:577px" width="10" height="7" viewBox="0 0 10 7"><path d="M1 1.5 L5 5.5 L9 1.5" stroke="#444" stroke-width="1" fill="none"/></svg>
  <div class="t" style="left:844px;top:614px;font-size:12.3px">延迟</div>
  <div class="a" style="left:845px;top:636px;width:63px;height:26px;background:#fff;border:1px solid #dedede;border-bottom-color:#8a8a8a;border-radius:2px"></div>
  <div class="t" style="left:849px;top:642px;font-size:12.3px">0</div>
  <div class="a" style="left:913px;top:634px;width:15px;height:14px;background:#ebebeb;border:1px solid #a8a8a8"></div>
  <div class="a" style="left:913px;top:648px;width:15px;height:14px;background:#ebebeb;border:1px solid #a8a8a8"></div>
  <svg class="a" style="left:916px;top:638px" width="8" height="20" viewBox="0 0 8 20"><path d="M1 5 L4 2 L7 5 Z M1 15 L4 18 L7 15 Z" fill="#000"/></svg>
</div></div>
</body>
</html>
